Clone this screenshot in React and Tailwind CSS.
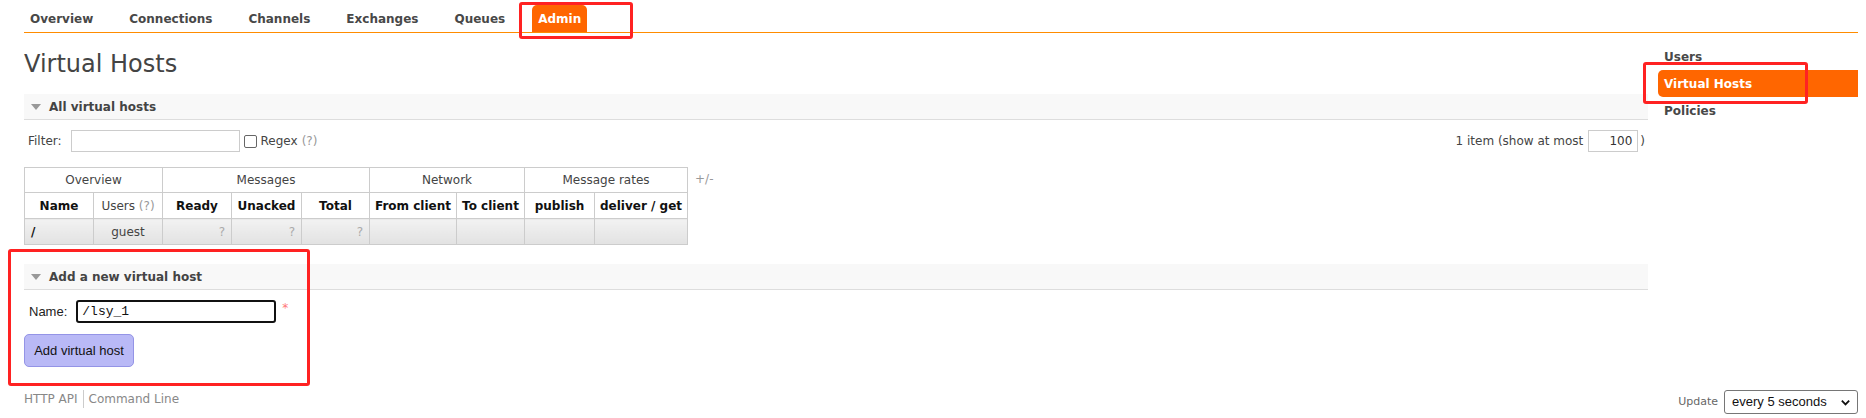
import React from "react";

const V = { fontFamily: '"DejaVu Sans", Verdana, sans-serif' };
const A = { fontFamily: '"Liberation Sans", Arial, sans-serif' };
const M = { fontFamily: '"Liberation Mono", "Courier New", monospace' };

function Tri() {
  return (
    <svg width="10" height="6" viewBox="0 0 10 6" className="shrink-0">
      <path d="M0 0 L10 0 L5 6 Z" fill="#999" />
    </svg>
  );
}

function SectionHead({ title }) {
  return (
    <div className="h-[26px] bg-[#f8f8f8] border-b border-[#ddd] flex items-center pl-[7px] gap-[8px]">
      <Tri />
      <span className="font-bold text-[12px] text-[#444]">{title}</span>
    </div>
  );
}

const navItems = ["Overview", "Connections", "Channels", "Exchanges", "Queues"];

export default function App() {
  const th1 = "border border-[#ccc] font-normal text-[#444] text-center h-[25px] p-0";
  const th2 = "border border-[#ccc] font-bold text-[#111] text-center h-[26px] p-0 whitespace-nowrap";
  const td = "border border-[#ccc] h-[26px] p-0 bg-linear-to-b from-[#f2f2f2] to-[#e2e2e2]";
  return (
    <div className="relative w-[1866px] h-[418px] bg-white text-[12px] text-[#444] overflow-hidden" style={V}>
      <div className="pl-[24px] pr-[8px]">
        {/* nav */}
        <div className="h-[33px] border-b border-[#ff8c00] flex items-end gap-[24px]">
          {navItems.map((n) => (
            <div key={n} className="h-[27px] px-[6px] flex items-center font-bold text-[#484848]">
              {n}
            </div>
          ))}
          <div className="-ml-[3px] h-[27px] px-[6px] flex items-center font-bold text-white bg-[#ff6600] rounded-t-[5px]">
            Admin
          </div>
        </div>

        <div className="flex gap-[10px]">
          {/* main */}
          <div className="w-[1624px]">
            <h1 className="mt-[17px] mb-[16px] text-[24px] leading-[28px] font-normal text-[#444]">Virtual Hosts</h1>

            <SectionHead title="All virtual hosts" />

            <div className="mt-[10px] h-[22px] flex items-center justify-between">
              <div className="flex items-center">
                <span className="ml-[4px] text-[#444]">Filter:</span>
                <div className="ml-[9px] w-[169px] h-[22px] border border-[#ccc] bg-white" />
                <span className="ml-[4px] w-[13px] h-[13px] border border-[#666] rounded-[2px] bg-white" />
                <span className="ml-[4px] text-[#444]">Regex</span>
                <span className="ml-[4px] text-[#999]">(?)</span>
              </div>
              <div className="flex items-center">
                <span className="text-[#444]">1 item (show at most</span>
                <div className="ml-[5px] w-[50px] h-[22px] border border-[#ccc] bg-white flex items-center justify-end pr-[5px] text-[#333]">
                  100
                </div>
                <span className="ml-[2px] mr-[3px] text-[#444]">)</span>
              </div>
            </div>

            <div className="mt-[15px] flex items-start">
              <table className="border-collapse table-fixed w-[663px] bg-white">
                <colgroup>
                  <col className="w-[69px]" />
                  <col className="w-[69px]" />
                  <col className="w-[69px]" />
                  <col className="w-[70px]" />
                  <col className="w-[68px]" />
                  <col className="w-[87px]" />
                  <col className="w-[68px]" />
                  <col className="w-[70px]" />
                  <col className="w-[93px]" />
                </colgroup>
                <thead>
                  <tr>
                    <th colSpan={2} className={th1}>Overview</th>
                    <th colSpan={3} className={th1}>Messages</th>
                    <th colSpan={2} className={th1}>Network</th>
                    <th colSpan={2} className={th1}>Message rates</th>
                  </tr>
                  <tr>
                    <th className={th2}>Name</th>
                    <th className="border border-[#ccc] font-normal text-center h-[26px] p-0 whitespace-nowrap">
                      <span className="text-[#444]">Users</span> <span className="text-[#999]">(?)</span>
                    </th>
                    <th className={th2}>Ready</th>
                    <th className={th2}>Unacked</th>
                    <th className={th2}>Total</th>
                    <th className={th2}>From client</th>
                    <th className={th2}>To client</th>
                    <th className={th2}>publish</th>
                    <th className={th2}>deliver / get</th>
                  </tr>
                </thead>
                <tbody>
                  <tr>
                    <td className={td + " font-bold text-[#111] pl-[6px]"}>/</td>
                    <td className={td + " text-center text-[#444]"}>guest</td>
                    <td className={td + " text-right pr-[6px] text-[#aaa]"}>?</td>
                    <td className={td + " text-right pr-[6px] text-[#aaa]"}>?</td>
                    <td className={td + " text-right pr-[6px] text-[#aaa]"}>?</td>
                    <td className={td}></td>
                    <td className={td}></td>
                    <td className={td}></td>
                    <td className={td}></td>
                  </tr>
                </tbody>
              </table>
              <span className="ml-[7px] mt-[3px] text-[#999]">+/-</span>
            </div>

            <div className="mt-[19px]">
              <SectionHead title="Add a new virtual host" />
            </div>

            <div className="mt-[10px] h-[23px] flex items-center">
              <span className="ml-[5px] text-[13px] text-[#222]" style={A}>Name:</span>
              <div className="ml-[9px] w-[200px] h-[23px] border-2 border-[#111] rounded-[3px] bg-white flex items-center pl-[4px] text-[13px] text-[#111]" style={M}>
                /lsy_1
              </div>
              <span className="ml-[6px] -mt-[8px] text-[12px] text-[#f77]">*</span>
            </div>

            <div className="mt-[11px]">
              <div className="w-[110px] h-[33px] rounded-[5px] bg-[#b9b9f6] border border-[#9494e6] flex items-center justify-center text-[13px] text-[#111]" style={A}>
                Add virtual host
              </div>
            </div>
          </div>

          {/* sidebar */}
          <div className="w-[200px] pt-[10px]">
            <div className="h-[27px] px-[6px] flex items-center font-bold text-[#484848]">Users</div>
            <div className="h-[27px] px-[6px] flex items-center font-bold text-white bg-[#ff6600] rounded-l-[5px]">Virtual Hosts</div>
            <div className="h-[27px] px-[6px] flex items-center font-bold text-[#484848]">Policies</div>
          </div>
        </div>

        {/* footer */}
        <div className="mt-[23px] h-[24px] flex items-center justify-between">
          <div className="flex items-center pb-[6px] text-[#888]">
            <span>HTTP API</span>
            <span className="mx-[5px] w-px h-[18px] bg-[#ccc]" />
            <span>Command Line</span>
          </div>
          <div className="flex items-center">
            <span className="text-[11px] text-[#666]">Update</span>
            <div className="ml-[6px] w-[134px] h-[24px] border border-[#767676] rounded-[3px] bg-white flex items-center justify-between pl-[7px] pr-[6px] text-[13px] text-[#111]" style={A}>
              <span>every 5 seconds</span>
              <svg width="11" height="11" viewBox="0 0 12 12">
                <path d="M2 4 L6 8 L10 4" fill="none" stroke="#111" strokeWidth="2" />
              </svg>
            </div>
          </div>
        </div>
      </div>

      {/* annotation boxes */}
      <div className="absolute left-[519px] top-[2px] w-[114px] h-[37px] border-[3px] border-[#ff2222] rounded-[3px] pointer-events-none" />
      <div className="absolute left-[1643px] top-[62px] w-[165px] h-[42px] border-[3px] border-[#ff2222] rounded-[3px] pointer-events-none" />
      <div className="absolute left-[8px] top-[249px] w-[302px] h-[137px] border-[3px] border-[#ff2222] rounded-[3px] pointer-events-none" />
    </div>
  );
}
